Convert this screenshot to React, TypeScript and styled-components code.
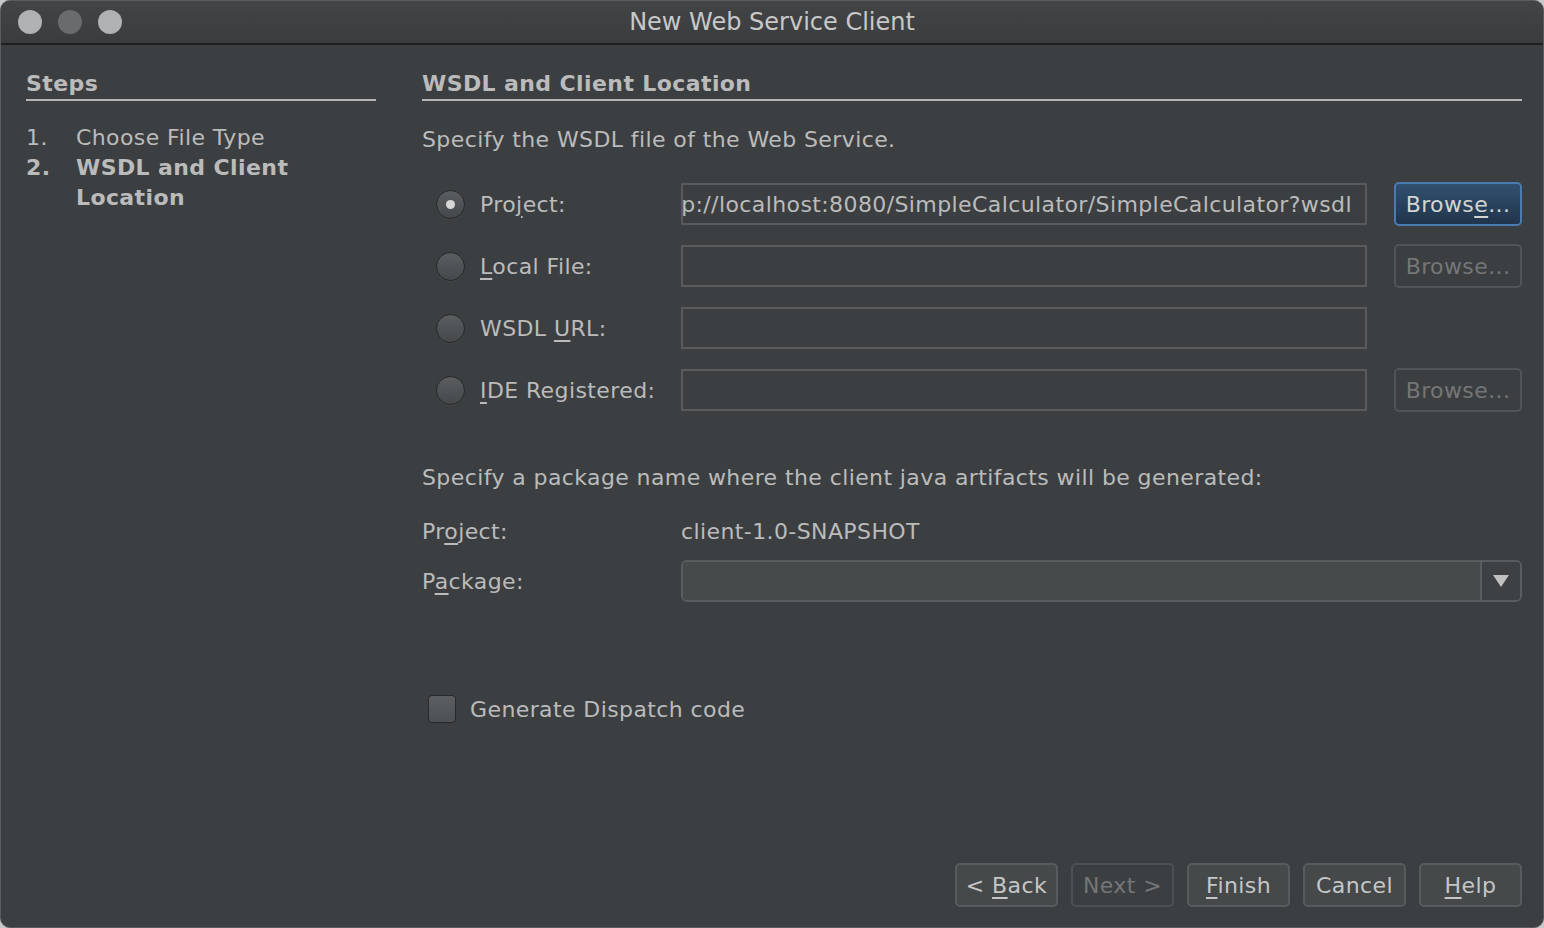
import React from "react";
import styled, { createGlobalStyle } from "styled-components";

const GlobalStyle = createGlobalStyle`
  html, body { margin: 0; padding: 0; background: #c9c9c9; }
  body { font-family: "DejaVu Sans", "Liberation Sans", sans-serif; }
  * { box-sizing: border-box; }
`;

const FONT = 22;
const TEXT = "#bbbbbb";
const DIM = "#747677";

const Window = styled.div`
  width: 1544px;
  height: 928px;
  background: #3c3f41;
  border-radius: 10px;
  border: 1px solid #5a5c5e;
  overflow: hidden;
  display: flex;
  flex-direction: column;
  color: ${TEXT};
  font-size: ${FONT}px;
  letter-spacing: 0.4px;
`;

const TitleBar = styled.div`
  height: 44px;
  flex: none;
  display: grid;
  grid-template-columns: 1fr auto 1fr;
  align-items: center;
  background: linear-gradient(#434446, #3b3c3e);
  border-bottom: 2px solid #1d1e1f;
`;

const Lights = styled.div`
  display: flex;
  gap: 16px;
  padding-left: 17px;
`;

const Light = styled.span<{ $dim?: boolean }>`
  width: 24px;
  height: 24px;
  border-radius: 50%;
  background: ${(p) => (p.$dim ? "#6a6b6c" : "#b0b1b2")};
`;

const Title = styled.div`
  color: #c8c8c8;
  font-size: 24px;
  letter-spacing: 0;
`;

const Body = styled.div`
  flex: 1;
  display: flex;
  flex-direction: column;
  padding: 0 21px 20px 25px;
`;

const Main = styled.div`
  flex: 1;
  display: flex;
  gap: 46px;
`;

const StepsPanel = styled.div`
  width: 350px;
  flex: none;
  padding-top: 26px;
`;

const Header = styled.div`
  font-weight: bold;
  padding-bottom: 2px;
  border-bottom: 2px solid #b5b5b5;
  line-height: 26px;
`;

const StepList = styled.ol`
  list-style: none;
  margin: 22px 0 0;
  padding: 0;
  display: flex;
  flex-direction: column;
`;

const Step = styled.li<{ $current?: boolean }>`
  display: flex;
  line-height: 30px;
  font-weight: ${(p) => (p.$current ? "bold" : "normal")};
`;

const StepNum = styled.span`
  width: 50px;
  flex: none;
`;

const Content = styled.div`
  flex: 1;
  padding-top: 26px;
  display: flex;
  flex-direction: column;
`;

const Para = styled.div<{ $top: number }>`
  margin-top: ${(p) => p.$top}px;
  line-height: 30px;
`;

const SourceGrid = styled.div`
  margin-top: 27px;
  display: grid;
  grid-template-columns: 259px 1fr 155px;
  row-gap: 18px;
  align-items: center;
`;

const RadioLabel = styled.label`
  display: flex;
  align-items: center;
  gap: 15px;
  padding-left: 14px;
  height: 44px;
  white-space: nowrap;
`;

const Radio = styled.span<{ $checked?: boolean }>`
  width: 29px;
  height: 29px;
  border-radius: 50%;
  flex: none;
  background: linear-gradient(#5b5e60, #45484a);
  border: 1px solid #262829;
  box-shadow: 0 1px 0 rgba(255,255,255,0.04);
  display: flex;
  align-items: center;
  justify-content: center;
  &::after {
    content: "";
    display: ${(p) => (p.$checked ? "block" : "none")};
    width: 9px;
    height: 9px;
    border-radius: 50%;
    background: #d6d6d6;
  }
`;

const Field = styled.div`
  height: 42px;
  border: 2px solid #585a5c;
  display: flex;
  align-items: center;
  padding: 0 13px 0 10px;
  overflow: hidden;
  white-space: nowrap;
  justify-content: flex-end;
`;

const Browse = styled.button<{ $primary?: boolean; $disabled?: boolean }>`
  font: inherit;
  letter-spacing: inherit;
  justify-self: end;
  width: 128px;
  height: 44px;
  border-radius: 5px;
  padding: 0;
  color: ${(p) => (p.$disabled ? DIM : "#d4d4d4")};
  border: 2px solid ${(p) => (p.$primary ? "#4b7bb3" : p.$disabled ? "#525557" : "#5b5e60")};
  background: ${(p) =>
    p.$primary ? "linear-gradient(#30506f, #21354b)" : p.$disabled ? "transparent" : "#45494a"};
`;

const Spacer = styled.div``;

const PackageGrid = styled.div`
  margin-top: 16px;
  display: grid;
  grid-template-columns: 259px 1fr;
  row-gap: 6px;
  align-items: center;
`;

const Value = styled.div`
  height: 44px;
  display: flex;
  align-items: center;
`;

const Combo = styled.div`
  height: 42px;
  display: flex;
  border: 2px solid #5a5d5f;
  border-radius: 6px;
  overflow: hidden;
`;

const ComboInput = styled.div`
  flex: 1;
  background: #464a4b;
`;

const ComboArrow = styled.div`
  width: 40px;
  border-left: 2px solid #5a5d5f;
  background: #3e4143;
  display: flex;
  align-items: center;
  justify-content: center;
`;

const CheckRow = styled.label`
  margin-top: 92px;
  display: flex;
  align-items: center;
  gap: 14px;
  padding-left: 6px;
`;

const Check = styled.span`
  width: 28px;
  height: 28px;
  border-radius: 4px;
  background: linear-gradient(#5c5f61, #4e5153);
  border: 1px solid #28292a;
`;

const Footer = styled.div`
  display: flex;
  justify-content: flex-end;
  gap: 13px;
`;

const FooterButton = styled.button<{ $disabled?: boolean }>`
  font: inherit;
  letter-spacing: inherit;
  width: 103px;
  height: 44px;
  padding: 0;
  border-radius: 5px;
  color: ${(p) => (p.$disabled ? DIM : "#c6c6c6")};
  border: 2px solid ${(p) => (p.$disabled ? "#4d5052" : "#585b5d")};
  background: ${(p) => (p.$disabled ? "#3c3f41" : "#45494a")};
`;

const U = styled.u`
  text-decoration-thickness: 2px;
  text-underline-offset: 4px;
`;

export default function App() {
  return (
    <>
      <GlobalStyle />
      <Window>
        <TitleBar>
          <Lights>
            <Light />
            <Light $dim />
            <Light />
          </Lights>
          <Title>New Web Service Client</Title>
          <div />
        </TitleBar>
        <Body>
          <Main>
            <StepsPanel>
              <Header>Steps</Header>
              <StepList>
                <Step>
                  <StepNum>1.</StepNum>
                  <span>Choose File Type</span>
                </Step>
                <Step $current>
                  <StepNum>2.</StepNum>
                  <span>
                    WSDL and Client
                    <br />
                    Location
                  </span>
                </Step>
              </StepList>
            </StepsPanel>
            <Content>
              <Header>WSDL and Client Location</Header>
              <Para $top={24}>Specify the WSDL file of the Web Service.</Para>
              <SourceGrid>
                <RadioLabel>
                  <Radio $checked />
                  <span>
                    Pro<U>j</U>ect:
                  </span>
                </RadioLabel>
                <Field>http://localhost:8080/SimpleCalculator/SimpleCalculator?wsdl</Field>
                <Browse $primary>
                  Brows<U>e</U>...
                </Browse>

                <RadioLabel>
                  <Radio />
                  <span>
                    <U>L</U>ocal File:
                  </span>
                </RadioLabel>
                <Field />
                <Browse $disabled>Browse...</Browse>

                <RadioLabel>
                  <Radio />
                  <span>
                    WSDL <U>U</U>RL:
                  </span>
                </RadioLabel>
                <Field />
                <Spacer />

                <RadioLabel>
                  <Radio />
                  <span>
                    <U>I</U>DE Registered:
                  </span>
                </RadioLabel>
                <Field />
                <Browse $disabled>Browse...</Browse>
              </SourceGrid>
              <Para $top={51}>
                Specify a package name where the client java artifacts will be generated:
              </Para>
              <PackageGrid>
                <Value>
                  <span>
                    Pr<U>o</U>ject:
                  </span>
                </Value>
                <Value>client-1.0-SNAPSHOT</Value>
                <Value>
                  <span>
                    P<U>a</U>ckage:
                  </span>
                </Value>
                <Combo>
                  <ComboInput />
                  <ComboArrow>
                    <svg width="16" height="12" viewBox="0 0 16 12">
                      <path d="M0 0 H16 L8 12 Z" fill="#c0c0c0" />
                    </svg>
                  </ComboArrow>
                </Combo>
              </PackageGrid>
              <CheckRow>
                <Check />
                <span>Generate Dispatch code</span>
              </CheckRow>
            </Content>
          </Main>
          <Footer>
            <FooterButton>
              &lt; <U>B</U>ack
            </FooterButton>
            <FooterButton $disabled>Next &gt;</FooterButton>
            <FooterButton>
              <U>F</U>inish
            </FooterButton>
            <FooterButton>Cancel</FooterButton>
            <FooterButton>
              <U>H</U>elp
            </FooterButton>
          </Footer>
        </Body>
      </Window>
    </>
  );
}
